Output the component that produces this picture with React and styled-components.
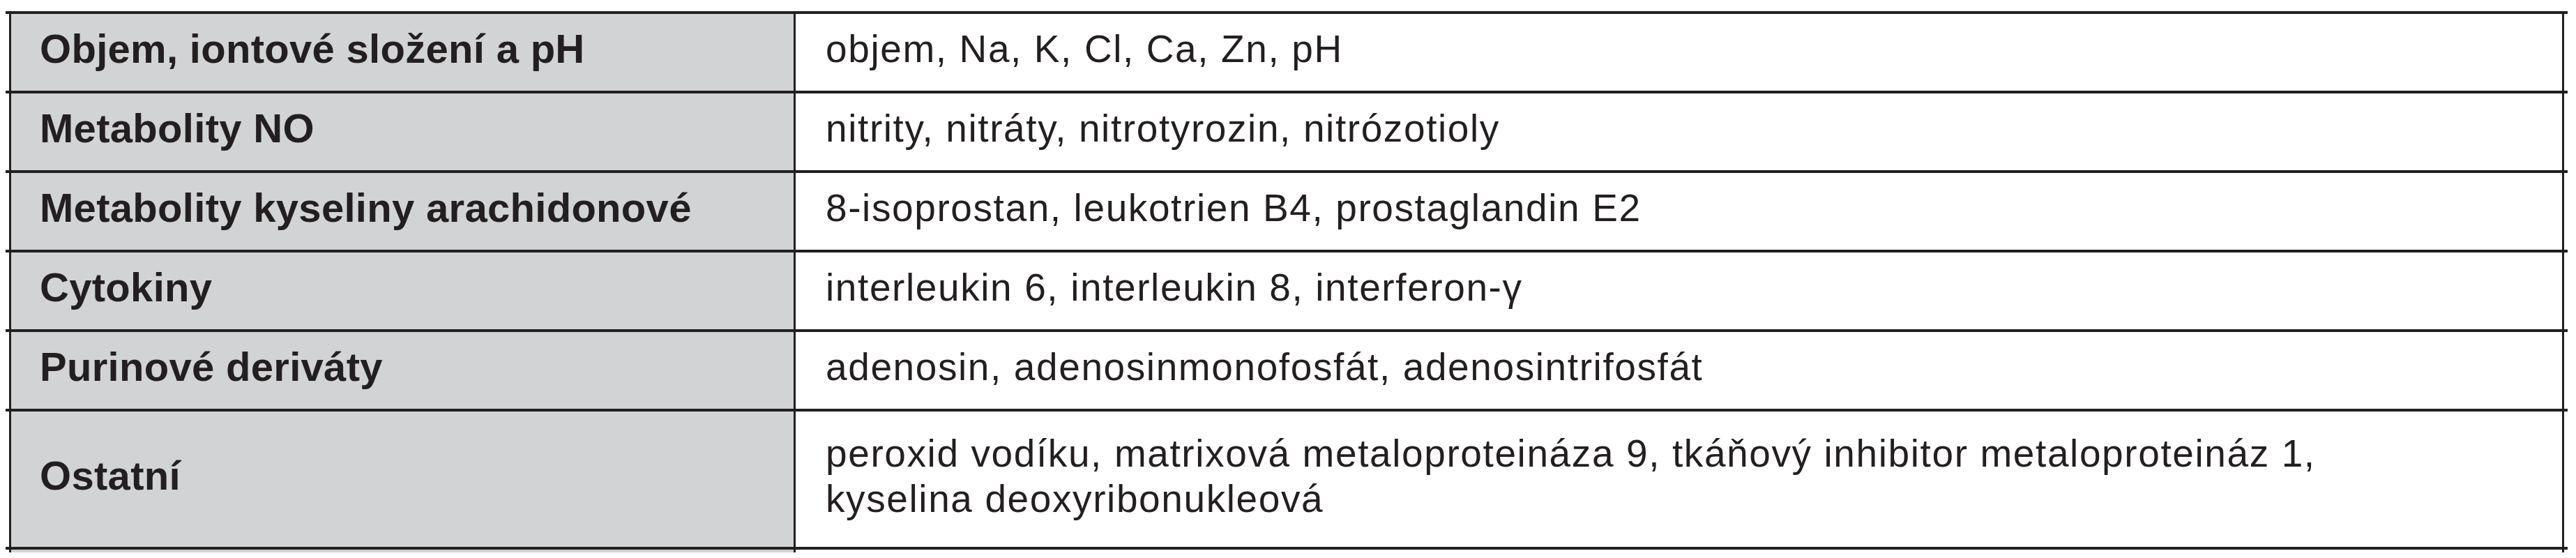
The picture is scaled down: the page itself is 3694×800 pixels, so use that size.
import React from 'react';
import styled, { createGlobalStyle } from 'styled-components';

const rows = [
	{ label: 'Objem, iontové složení a pH', value: ['objem, Na, K, Cl, Ca, Zn, pH'] },
	{ label: 'Metabolity NO', value: ['nitrity, nitráty, nitrotyrozin, nitrózotioly'] },
	{ label: 'Metabolity kyseliny arachidonové', value: ['8-isoprostan, leukotrien B4, prostaglandin E2'] },
	{ label: 'Cytokiny', value: ['interleukin 6, interleukin 8, interferon-γ'] },
	{ label: 'Purinové deriváty', value: ['adenosin, adenosinmonofosfát, adenosintrifosfát'] },
	{
		label: 'Ostatní',
		value: [
			'peroxid vodíku, matrixová metaloproteináza 9, tkáňový inhibitor metaloproteináz 1,',
			'kyselina deoxyribonukleová',
		],
		height: 194,
	},
];

const App = () => {
	return (
		<>
			<GlobalStyle />
			<Table>
				{rows.map((row) => (
					<Row key={row.label} $height={row.height}>
						<LabelCell>{row.label}</LabelCell>
						<ValueCell>
							{row.value.map((line) => (
								<span key={line}>{line}</span>
							))}
						</ValueCell>
					</Row>
				))}
				<Row $height={4}>
					<LabelCell />
					<ValueCell />
				</Row>
			</Table>
		</>
	);
};

export default App;

const GlobalStyle = createGlobalStyle`
	html, body {
		margin: 0;
		padding: 0;
		background: #ffffff;
	}

	body {
		font-family: "Liberation Sans", Arial, sans-serif;
		color: #231f20;
	}
`;

const Table = styled.div`
	margin: 16px 0 0 8px;
	width: 3674px;
	display: flex;
	flex-direction: column;
`;

const Row = styled.div`
	display: grid;
	grid-template-columns: 1125px 2539px;
	padding: 0 5px;
	height: ${({ $height }) => ($height || 110) + 4}px;
	box-sizing: border-box;
	border-top: 4px solid #231f20;
`;

const LabelCell = styled.div`
	display: flex;
	align-items: center;
	box-sizing: border-box;
	border-left: 3px solid #231f20;
	background: #d1d3d4;
	padding: 0 0 12px 41px;
	font-size: 58px;
	line-height: 65px;
	font-weight: 700;
	letter-spacing: 0.3px;
	white-space: nowrap;
`;

const ValueCell = styled.div`
	display: flex;
	flex-direction: column;
	justify-content: center;
	box-sizing: border-box;
	border-left: 3px solid #231f20;
	border-right: 3px solid #231f20;
	background: #ffffff;
	padding: 0 0 9px 43px;
	font-size: 55px;
	line-height: 65px;
	letter-spacing: 1.6px;
	white-space: nowrap;

	span {
		display: block;
	}
`;
